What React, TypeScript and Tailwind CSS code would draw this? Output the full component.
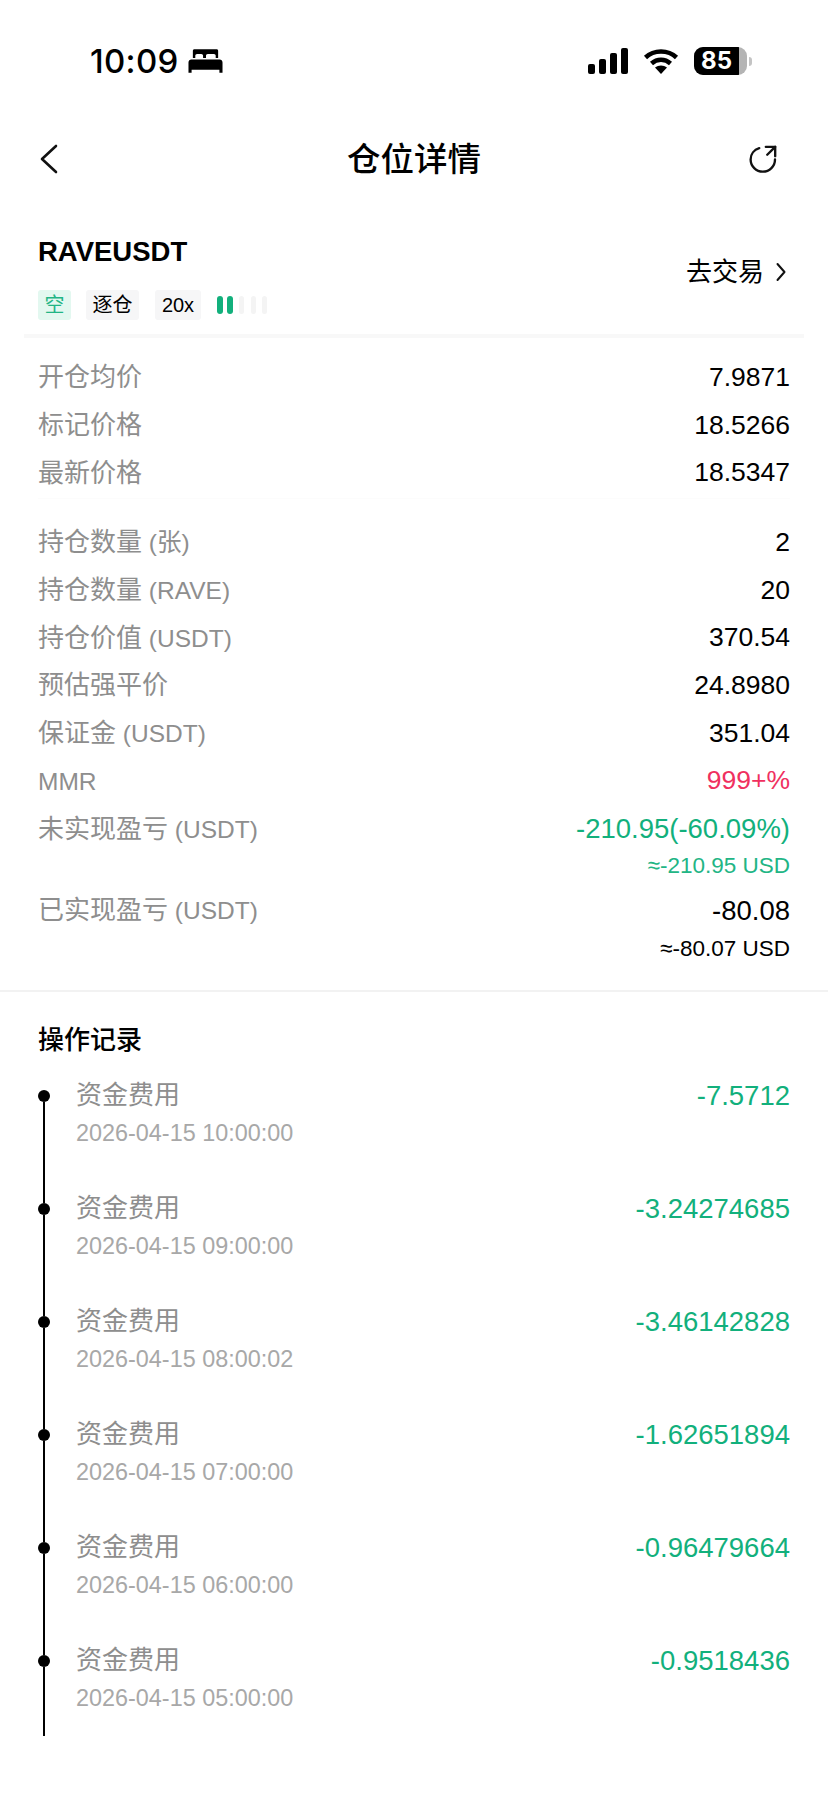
const font = "font-['Liberation_Sans','Noto_Sans_CJK_SC',sans-serif]";

const topRows = [
  { label: "开仓均价", value: "7.9871" },
  { label: "标记价格", value: "18.5266" },
  { label: "最新价格", value: "18.5347" },
];

const midRows = [
  { label: "持仓数量", unit: " (张)", value: "2", color: "text-black" },
  { label: "持仓数量", unit: " (RAVE)", value: "20", color: "text-black" },
  { label: "持仓价值", unit: " (USDT)", value: "370.54", color: "text-black" },
  { label: "预估强平价", value: "24.8980", color: "text-black" },
  { label: "保证金", unit: " (USDT)", value: "351.04", color: "text-black" },
  { label: "", unit: "MMR", value: "999+%", color: "text-[#f0305f]" },
];

const records = [
  { amount: "-7.5712", time: "2026-04-15 10:00:00" },
  { amount: "-3.24274685", time: "2026-04-15 09:00:00" },
  { amount: "-3.46142828", time: "2026-04-15 08:00:02" },
  { amount: "-1.62651894", time: "2026-04-15 07:00:00" },
  { amount: "-0.96479664", time: "2026-04-15 06:00:00" },
  { amount: "-0.9518436", time: "2026-04-15 05:00:00" },
];

function Row({ label, unit, value, color = "text-black text-[26.5px]" }: { label: string; unit?: string; value: string; color?: string }) {
  return (
    <div className="flex h-[47.7px] items-center justify-between">
      <span className="whitespace-pre text-[26px] text-[#8e8e8e]">
        {label}
        {unit && <span className="text-[24.5px]">{unit}</span>}
      </span>
      <span className={color}>{value}</span>
    </div>
  );
}

function StatusBar() {
  return (
    <div className="flex h-[122px] items-center justify-between pl-[90px] pr-[76px]">
      <div className="flex items-center gap-[9px]">
        <span className="font-['Inter',sans-serif] text-[33px] font-medium leading-none tracking-[0.3px] text-black">10:09</span>
        <svg width="35" height="24" viewBox="0 0 36 24" fill="#000">
          <path d="M5 1.500C5 .7 5.700 0 6.500 0h23c.8 0 1.500.7 1.500 1.500V9h-2.500V6.500c0-1-.8-1.800-1.800-1.800h-6.400c-1 0-1.800.8-1.800 1.800V9h-3V6.500c0-1-.8-1.800-1.800-1.800H9.300c-1 0-1.800.8-1.800 1.800V9H5z" />
          <path d="M3.500 10.500h29c1.700 0 3 1.300 3 3V24h-3.200v-3H3.700v3H.5V13.500c0-1.700 1.300-3 3-3z" />
        </svg>
      </div>
      <div className="flex items-center gap-[15px]">
        <svg width="40" height="26" viewBox="0 0 40 26" fill="#000">
          <rect x="0" y="16" width="7" height="10" rx="2" />
          <rect x="11" y="11" width="7" height="15" rx="2" />
          <rect x="22" y="5" width="7" height="21" rx="2" />
          <rect x="33" y="0" width="7" height="26" rx="2" />
        </svg>
        <svg width="36" height="28" viewBox="0 0 36 28" fill="none" stroke="#000" strokeWidth="4.500">
          <path d="M2.500 10.500C11 2.500 25 2.500 33.500 10.500" />
          <path d="M8.500 16.500C14 11.500 22 11.500 27.500 16.500" />
          <path d="M18 27l-6-6.500c3.500-2.800 8.500-2.800 12 0z" fill="#000" stroke="none" />
        </svg>
        <div className="flex items-center">
          <div className="flex h-[28px] w-[53px] overflow-hidden rounded-[9px] bg-[#b4b4b4]">
            <div className="flex w-[45px] items-center justify-center bg-black font-['Inter',sans-serif] text-[24px] font-bold leading-none text-white">
              85
            </div>
          </div>
          <div className="ml-[2px] h-[9px] w-[3px] rounded-r-full bg-[#c4c4c4]" />
        </div>
      </div>
    </div>
  );
}

function Nav() {
  return (
    <div className="grid h-[74px] grid-cols-[1fr_auto_1fr] items-center pl-[38px] pr-[50px]">
      <svg width="24" height="32" viewBox="0 0 24 32" fill="none" stroke="#111" strokeWidth="2.600" strokeLinecap="round" strokeLinejoin="round">
        <path d="M18 3L4 16l14 13" />
      </svg>
      <span className="pl-[12px] pt-[2px] text-[33.5px] font-medium text-black">仓位详情</span>
      <svg className="justify-self-end" width="30" height="30" viewBox="0 0 32 32" fill="none" stroke="#111" strokeWidth="2.500" strokeLinecap="round" strokeLinejoin="round">
        <path d="M12 4.500C6.500 6.200 2.800 10.800 2.800 16.500 2.800 23.700 8.700 29.500 15.800 29.500c7.200 0 13-5.800 13-13" />
        <path d="M20.500 11.500L29 3" />
        <path d="M19 3h10v10" />
      </svg>
    </div>
  );
}

function Tags() {
  return (
    <div className="flex items-center">
      <span className="flex h-[30px] w-[33px] items-center justify-center rounded-[3px] bg-[#e3f8f0] text-[20px] text-[#22b585]">空</span>
      <span className="ml-[15px] flex h-[30px] w-[53px] items-center justify-center rounded-[3px] bg-[#f6f6f7] text-[20px] text-black">逐仓</span>
      <span className="ml-[16px] flex h-[30px] w-[46px] items-center justify-center rounded-[3px] bg-[#f6f6f7] text-[20px] text-black">20x</span>
      <div className="ml-[16px] flex">
        <i className="h-[18px] w-[6px] rounded-full bg-[#12b07c]" />
        <i className="ml-[4px] h-[18px] w-[6px] rounded-full bg-[#12b07c]" />
        <i className="ml-[6px] h-[18px] w-[5px] rounded-full bg-[#f4f4f4]" />
        <i className="ml-[7px] h-[18px] w-[5px] rounded-full bg-[#f4f4f4]" />
        <i className="ml-[6px] h-[18px] w-[5px] rounded-full bg-[#f4f4f4]" />
      </div>
    </div>
  );
}

function Symbol() {
  return (
    <div className="flex h-[138px] items-start justify-between px-[38px]">
      <div>
        <div className="mt-[38px] text-[27.5px] font-bold leading-[36px] text-black">RAVEUSDT</div>
        <div className="mt-[20px]">
          <Tags />
        </div>
      </div>
      <div className="mt-[58px] flex h-[36px] items-center gap-[12px] pr-[4px] text-[26px] text-black">
        去交易
        <svg width="10" height="20" viewBox="0 0 10 20" fill="none" stroke="#111" strokeWidth="2" strokeLinecap="round" strokeLinejoin="round">
          <path d="M1.500 2l7 8-7 8" />
        </svg>
      </div>
    </div>
  );
}

function RecordItem({ amount, time, index }: { amount: string; time: string; index: number }) {
  const last = index === records.length - 1;
  return (
    <div className={`flex ${last ? "h-[93px]" : "h-[113px]"}`}>
      <div className="flex w-[12px] flex-col items-center">
        <div className={`h-[12px] w-[2px] ${index === 0 ? "" : "bg-black"}`} />
        <div className="h-[12px] w-[12px] shrink-0 rounded-full bg-black" />
        <div className="w-[2px] flex-1 bg-black" />
      </div>
      <div className="ml-[26px] flex-1">
        <div className="flex h-[36px] items-center justify-between">
          <span className="text-[26px] text-[#8e8e8e]">资金费用</span>
          <span className="text-[27.5px] text-[#12b07c]">{amount}</span>
        </div>
        <div className="flex h-[40px] items-center text-[23.4px] text-[#a8a8a8]">{time}</div>
      </div>
    </div>
  );
}

export default function App() {
  return (
    <div className={`h-[1800px] w-[828px] overflow-hidden bg-white ${font}`}>
      <StatusBar />
      <Nav />
      <Symbol />
      <div className="mx-[24px] h-[4px] bg-[#f8f8f8]" />

      <div className="px-[38px] pt-[16px]">
        {topRows.map((r) => (
          <Row key={r.label} label={r.label} value={r.value} />
        ))}
      </div>
      <div className="mx-[38px] mt-[1px] h-[1px] bg-[#fcfcfc]" />
      <div className="px-[38px] pt-[20px]">
        {midRows.map((r) => (
          <Row key={r.label + r.unit} label={r.label} unit={r.unit} value={r.value} color={`text-[26.5px] ${r.color}`} />
        ))}

        <Row label="未实现盈亏" unit=" (USDT)" value="-210.95(-60.09%)" color="text-[27.5px] text-[#12b07c]" />
        <div className="flex h-[26px] items-center justify-end text-[22.5px] text-[#22b585]">≈-210.95 USD</div>
        <div className="mt-[8px]">
          <Row label="已实现盈亏" unit=" (USDT)" value="-80.08" color="text-[27.5px] text-black" />
        </div>
        <div className="flex h-[28px] items-center justify-end text-[22.5px] text-black">≈-80.07 USD</div>
      </div>

      <div className="mt-[27px] h-[2px] bg-[#f2f2f2]" />

      <div className="px-[38px]">
        <div className="flex h-[86px] items-center pt-[12px] text-[26px] font-medium text-black">操作记录</div>
        {records.map((r, i) => (
          <RecordItem key={r.time} amount={r.amount} time={r.time} index={i} />
        ))}
      </div>
    </div>
  );
}
